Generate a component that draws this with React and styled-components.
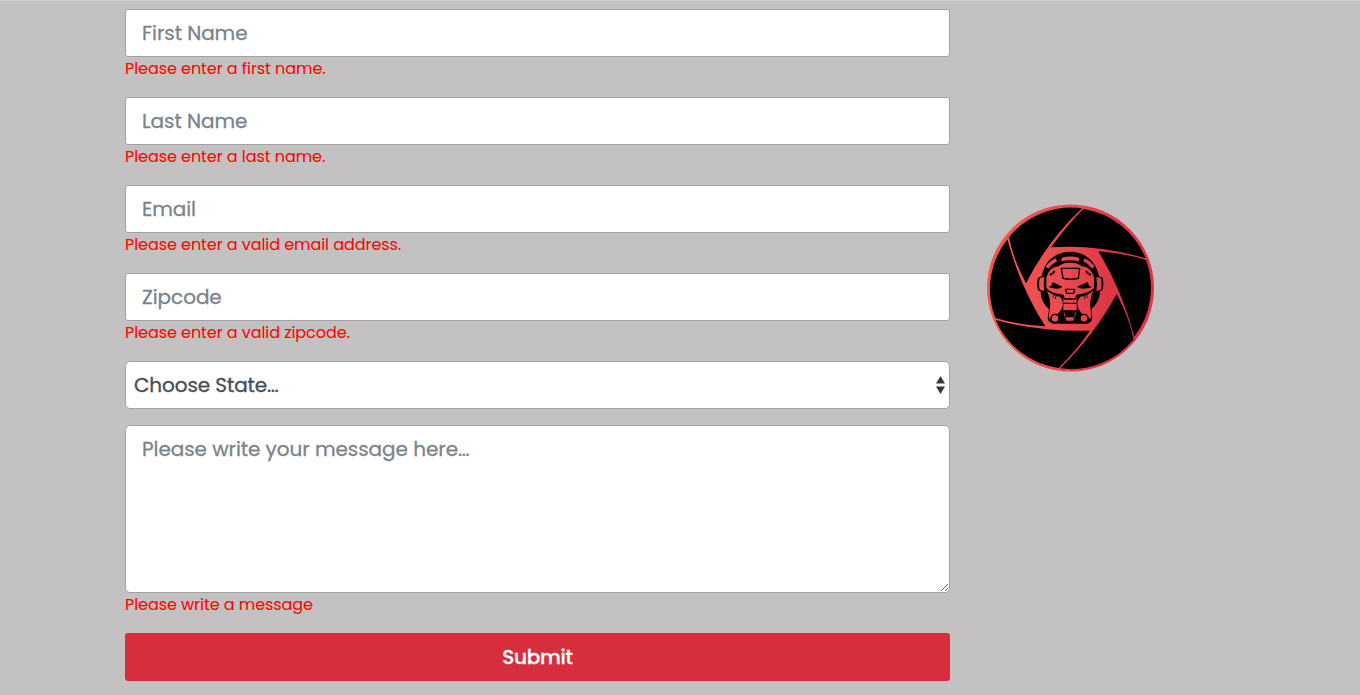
import React from "react";
import styled, { createGlobalStyle } from "styled-components";

const GlobalStyle = createGlobalStyle`
  *, *::before, *::after { box-sizing: border-box; }
  body {
    margin: 0;
    background: #c4c1c2;
    font-family: Poppins, Inter, "Open Sans", sans-serif;
    font-size: 16px;
    line-height: 24px;
    overflow: hidden;
  }
`;

const Page = styled.main`
  height: 695px;
  padding-top: 8px;
  border-top: 1px solid #d0cecf;
`;

const Container = styled.div`
  width: 1140px;
  margin-left: 110px;
  display: grid;
  grid-template-columns: 855px 285px;
`;

const Form = styled.form`
  padding: 0 15px;
`;

const Field = styled.div`
  margin-bottom: 16px;
`;

const Control = styled.input`
  display: block;
  width: 100%;
  height: ${(p) => p.$height || 48}px;
  margin: 0;
  padding: 8px 16px;
  border: 1px solid #a3a1a3;
  border-radius: ${(p) => p.$radius || 3}px;
  background: #fff;
  font: inherit;
  font-size: 20px;
  line-height: 30px;
  letter-spacing: -0.06px;
  outline: none;
  resize: vertical;
  &::placeholder {
    color: #7b838b;
    opacity: 1;
    -webkit-text-stroke: 0.3px #7b838b;
  }
`;

const SelectBox = styled.div`
  display: flex;
  align-items: center;
  justify-content: space-between;
  height: 48px;
  padding: 0 4px 0 8px;
  border: 1px solid #a3a1a3;
  border-radius: 5px;
  background: #fff;
  color: #454d55;
  font-size: 20px;
  letter-spacing: -0.1px;
  -webkit-text-stroke: 0.3px #454d55;
`;

const ErrorText = styled.div`
  height: 24px;
  color: #ff0000;
  white-space: nowrap;
  letter-spacing: -0.06px;
`;

const Submit = styled.button`
  display: block;
  width: 100%;
  height: 48px;
  padding: 0;
  border: 0;
  border-radius: 3px;
  background: #d72e3d;
  color: #fff;
  font: inherit;
  font-size: 20px;
  font-weight: 500;
  letter-spacing: -0.25px;
  -webkit-text-stroke: 0.3px #fff;
`;

const Aside = styled.aside`
  padding: 189px 0 0 15px;
`;

const Emblem = styled.svg`
  display: block;
  width: 180px;
  height: 180px;
`;

const Arrows = () => (
  <svg width="9" height="18" viewBox="0 0 9 18" fill="#343a40">
    <path d="M0 7.5 4.5 0 9 7.5Z" />
    <path d="M0 10.5H9L4.5 18Z" />
  </svg>
);

const blades = [
  "M310 33Q262 80 213 148Q355 139 497 181A241 241 0 0 0 310 33Z",
  "M498 186Q430 165 355 160Q424 272 463 416A241 241 0 0 0 498 186Z",
  "M461 424Q447 357 410 288Q343 411 240 511A241 241 0 0 0 461 424Z",
  "M236 510Q290 457 330 398Q185 403 47 366A241 241 0 0 0 236 510Z",
  "M46 360Q115 381 196 385Q122 270 82 124A241 241 0 0 0 46 360Z",
  "M87 117Q101 187 138 256Q200 132 306 31A241 241 0 0 0 87 117Z",
];

const Logo = () => (
  <Emblem viewBox="0 0 540 540">
    <defs>
      <linearGradient id="red" gradientUnits="userSpaceOnUse" x1="21" y1="240" x2="522" y2="300">
        <stop offset="0" stopColor="#f4574f" />
        <stop offset=".45" stopColor="#eb4b4f" />
        <stop offset=".75" stopColor="#dc3545" />
        <stop offset="1" stopColor="#dc3545" />
      </linearGradient>
    </defs>
    <circle cx="271.5" cy="270" r="250.5" fill="url(#red)" />
    {blades.map((d) => <path key={d} d={d} />)}
    {/* helmet silhouette */}
    <path d="M271 161C317 161 349 193 357 235L368 239Q373 258 367 277L360 280C360 303 349 320 334 334L337 361Q335 374 322 377H220Q205 374 203 361L207 334C192 320 182 303 182 280L174 277Q169 258 174 239L185 235C192 193 223 161 271 161Z" />
    <g fill="url(#red)">
      <path d="M179 240L193 237Q189 258 193 279L179 275Q175 258 179 240Z" />
      <path d="M363 240L349 237Q353 258 349 279L363 275Q367 258 363 240Z" />
      <path d="M245 179Q271 172 297 179V190Q271 184 245 190Z" />
      <path d="M197 204Q210 188 227 181L231 190Q215 198 204 212Z" />
      <path d="M344 204Q331 188 314 181L310 190Q326 198 337 212Z" />
      {/* face */}
      <path d="M199 269V240C205 219 215 207 236 205Q244 195 271 194Q297 195 305 205C326 207 337 219 342 240V269Q332 284 310 288L290 291V337H250V291L231 288Q209 284 199 269Z" />
      {/* cheeks */}
      <path d="M200 276Q218 294 240 296Q254 312 246 331Q239 345 228 352L207 362Q206 346 210 330Q213 304 200 276Z" />
      <path d="M341 276Q323 294 301 296Q287 312 295 331Q302 345 310 352L334 362Q335 346 331 330Q328 304 341 276Z" />
      <g stroke="#000" strokeWidth="4">
        <circle cx="225" cy="361" r="12" />
        <circle cx="312" cy="361" r="12" />
      </g>
      <path d="M256 358H283L280 368H259Z" />
      <path d="M251 343H253L256 357H254ZM288 343H286L283 357H285Z" />
    </g>
    <g fill="none" stroke="#000" strokeWidth="4" strokeLinejoin="round">
      <path d="M244 211H299L295 241Q271 246 249 241Z" />
      <path d="M256 274H284L281 286H260Z" />
      <path d="M247 290L254 303H286L293 290M250 316H289" />
      <path d="M211 232L215 226M218 227L224 219M318 219L324 227M327 226L331 232" strokeWidth="6" />
      <path d="M221 291L219 299M229 292L225 303M320 291L322 299M312 292L316 303" strokeWidth="2.5" />
      <path d="M199 274Q213 287 246 292M342 274Q328 287 294 292" strokeWidth="4" />
    </g>
    <path d="M205 267L214 263L218 252L247 266Q242 272 230 272L215 270ZM336 267L327 263L323 252L291 266Q298 272 310 272L326 270Z" />
  </Emblem>
);

const fields = [
  { label: "First Name", error: "Please enter a first name." },
  { label: "Last Name", error: "Please enter a last name." },
  { label: "Email", error: "Please enter a valid email address." },
  { label: "Zipcode", error: "Please enter a valid zipcode." },
];

export default function App() {
  return (
    <Page>
      <GlobalStyle />
      <Container>
        <Form>
          {fields.map((f) => (
            <Field key={f.label}>
              <Control placeholder={f.label} />
              <ErrorText>{f.error}</ErrorText>
            </Field>
          ))}
          <Field>
            <SelectBox>Choose State…<Arrows /></SelectBox>
          </Field>
          <Field>
            <Control as="textarea" $height={168} $radius={5} placeholder="Please write your message here…" />
            <ErrorText>Please write a message</ErrorText>
          </Field>
          <Submit type="button">Submit</Submit>
        </Form>
        <Aside>
          <Logo />
        </Aside>
      </Container>
    </Page>
  );
}
